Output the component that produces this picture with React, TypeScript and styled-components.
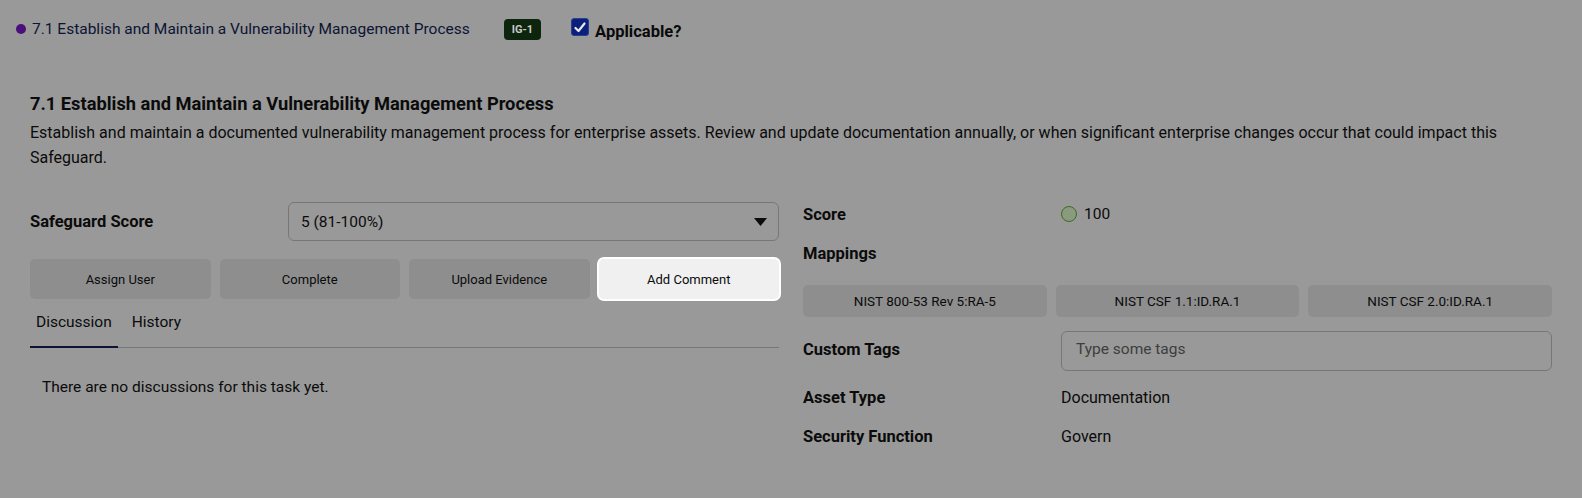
import styled, { createGlobalStyle } from "styled-components";

const Global = createGlobalStyle`
	html, body {
		margin: 0;
		padding: 0;
		background: #999999;
	}
	body {
		font-family: Roboto, "Liberation Sans", Arial, sans-serif;
		color: #111;
	}
	* {
		box-sizing: border-box;
	}
`;

const Page = styled.div`
	width: 1582px;
	height: 498px;
	background: #999999;
	padding: 18px 30px 0 16px;
	overflow: hidden;
`;

const TopRow = styled.div`
	display: flex;
	align-items: center;
	height: 22px;
`;
const Dot = styled.span`
	width: 10px;
	height: 10px;
	border-radius: 50%;
	background: #4a0f7a;
	margin-right: 6px;
`;
const TopTitle = styled.span`
	font-size: 15.5px;
	color: #0c1433;
	margin-right: 34px;
`;
const Badge = styled.span`
	background: #0d240d;
	color: #c9c9c9;
	font-size: 11px;
	font-weight: 700;
	border-radius: 4px;
	padding: 4px 8px;
	line-height: 13px;
	margin-right: 30px;
`;
const Check = styled.span`
	width: 18px;
	height: 18px;
	border-radius: 3px;
	background: #0b1f7c;
	border: 1px solid #2b3f8f;
	display: inline-flex;
	align-items: center;
	justify-content: center;
	margin-right: 6px;
	margin-top: -4px;
`;
const CheckLabel = styled.span`
	font-size: 16.5px;
	font-weight: 700;
	color: #0a0a0a;
	margin-top: 4px;
`;

const Section = styled.div`
	padding-left: 14px;
	margin-top: 53px;
`;
const Heading = styled.h2`
	margin: 0;
	font-size: 18.3px;
	line-height: 22px;
	font-weight: 700;
	color: #0b0b0b;
`;
const Desc = styled.p`
	margin: 5px 0 0;
	font-size: 16px;
	line-height: 25px;
	color: #0b0b0b;
`;

const Columns = styled.div`
	display: grid;
	grid-template-columns: 1fr 1fr;
	column-gap: 24px;
	margin-top: 32px;
`;
const Col = styled.div<{ $pt?: number }>`
	display: flex;
	flex-direction: column;
	padding-top: ${(p) => p.$pt ?? 0}px;
`;
const Row = styled.div<{ $h: number; $mt?: number }>`
	display: grid;
	grid-template-columns: 258px 1fr;
	align-items: center;
	height: ${(p) => p.$h}px;
	margin-top: ${(p) => p.$mt ?? 0}px;
`;
const Label = styled.span<{ $up?: number }>`
	font-size: 16.5px;
	font-weight: 700;
	color: #0b0b0b;
	margin-top: ${(p) => -(p.$up ?? 0)}px;
`;
const Value = styled.span`
	font-size: 16px;
	color: #0b0b0b;
`;
const Select = styled.div`
	height: 39px;
	border: 1px solid #777;
	border-radius: 6px;
	display: flex;
	align-items: center;
	justify-content: space-between;
	padding: 0 11px 0 12px;
	font-size: 15.5px;
	color: #0b0b0b;
`;
const Buttons = styled.div`
	display: grid;
	grid-template-columns: repeat(4, 1fr);
	column-gap: 9px;
	margin-top: 18px;
`;
const Btn = styled.div<{ $active?: boolean }>`
	height: 40px;
	border-radius: 5px;
	display: flex;
	align-items: center;
	justify-content: center;
	font-size: 13px;
	color: #0b0b0b;
	background: ${(p) => (p.$active ? "#f0f0f0" : "#8e8e8e")};
	box-shadow: ${(p) => (p.$active ? "0 0 0 2px #ffffff" : "none")};
`;
const Tabs = styled.div`
	display: flex;
	border-bottom: 1px solid #777;
	margin-top: 2px;
`;
const Tab = styled.div<{ $active?: boolean }>`
	font-size: 15.5px;
	line-height: 18px;
	padding: 12px 6px 15px;
	margin-right: 8px;
	color: #0b0b0b;
	border-bottom: 2px solid ${(p) => (p.$active ? "#0c1433" : "transparent")};
	margin-bottom: -1px;
`;
const Empty = styled.div`
	font-size: 15.5px;
	line-height: 20px;
	padding: 29px 12px 0;
	color: #0b0b0b;
`;
const ScoreValue = styled.div`
	display: flex;
	align-items: center;
	gap: 7px;
	font-size: 15.5px;
	color: #0b0b0b;
`;
const Circle = styled.span`
	width: 16px;
	height: 16px;
	border-radius: 50%;
	background: #8a9a7e;
	border: 1px solid #3d6b1e;
`;
const Chips = styled.div`
	display: grid;
	grid-template-columns: repeat(3, 1fr);
	column-gap: 9px;
	margin-top: 22px;
`;
const Chip = styled.div`
	height: 32px;
	border-radius: 5px;
	background: #8e8e8e;
	display: flex;
	align-items: center;
	justify-content: center;
	font-size: 13.5px;
	color: #0b0b0b;
`;
const TagInput = styled.div`
	height: 40px;
	border: 1px solid #777;
	border-radius: 6px;
	display: flex;
	align-items: flex-start;
	padding: 8px 14px 0;
	font-size: 15.5px;
	color: #3e3e3e;
`;

const buttons = ["Assign User", "Complete", "Upload Evidence", "Add Comment"];
const mappings = ["NIST 800-53 Rev 5:RA-5", "NIST CSF 1.1:ID.RA.1", "NIST CSF 2.0:ID.RA.1"];

export default function App() {
	return (
		<>
			<Global />
			<Page>
				<TopRow>
					<Dot />
					<TopTitle>7.1 Establish and Maintain a Vulnerability Management Process</TopTitle>
					<Badge>IG-1</Badge>
					<Check>
						<svg width="12" height="11" viewBox="0 0 12 11">
							<path d="M1.5 6 L4.5 9 L10.5 1.5" stroke="#e8e8e8" strokeWidth="2.2" fill="none" strokeLinecap="round" strokeLinejoin="round" />
						</svg>
					</Check>
					<CheckLabel>Applicable?</CheckLabel>
				</TopRow>

				<Section>
					<Heading>7.1 Establish and Maintain a Vulnerability Management Process</Heading>
					<Desc>
						Establish and maintain a documented vulnerability management process for enterprise assets. Review and update documentation annually, or when significant enterprise changes occur that could impact this Safeguard.
					</Desc>

					<Columns>
						<Col>
							<Row $h={39}>
								<Label>Safeguard Score</Label>
								<Select>
									<span>5 (81-100%)</span>
									<svg width="13" height="8" viewBox="0 0 13 8">
										<path d="M0 0 L13 0 L6.5 8 Z" fill="#0b0b0b" />
									</svg>
								</Select>
							</Row>
							<Buttons>
								{buttons.map((b) => (
									<Btn key={b} $active={b === "Add Comment"}>
										{b}
									</Btn>
								))}
							</Buttons>
							<Tabs>
								<Tab $active>Discussion</Tab>
								<Tab>History</Tab>
							</Tabs>
							<Empty>There are no discussions for this task yet.</Empty>
						</Col>

						<Col $pt={2}>
							<Row $h={20}>
								<Label>Score</Label>
								<ScoreValue>
									<Circle />
									100
								</ScoreValue>
							</Row>
							<Row $h={20} $mt={19}>
								<Label>Mappings</Label>
							</Row>
							<Chips>
								{mappings.map((m) => (
									<Chip key={m}>{m}</Chip>
								))}
							</Chips>
							<Row $h={40} $mt={14}>
								<Label $up={4}>Custom Tags</Label>
								<TagInput>Type some tags</TagInput>
							</Row>
							<Row $h={20} $mt={16}>
								<Label>Asset Type</Label>
								<Value>Documentation</Value>
							</Row>
							<Row $h={20} $mt={19}>
								<Label>Security Function</Label>
								<Value>Govern</Value>
							</Row>
						</Col>
					</Columns>
				</Section>
			</Page>
		</>
	);
}
